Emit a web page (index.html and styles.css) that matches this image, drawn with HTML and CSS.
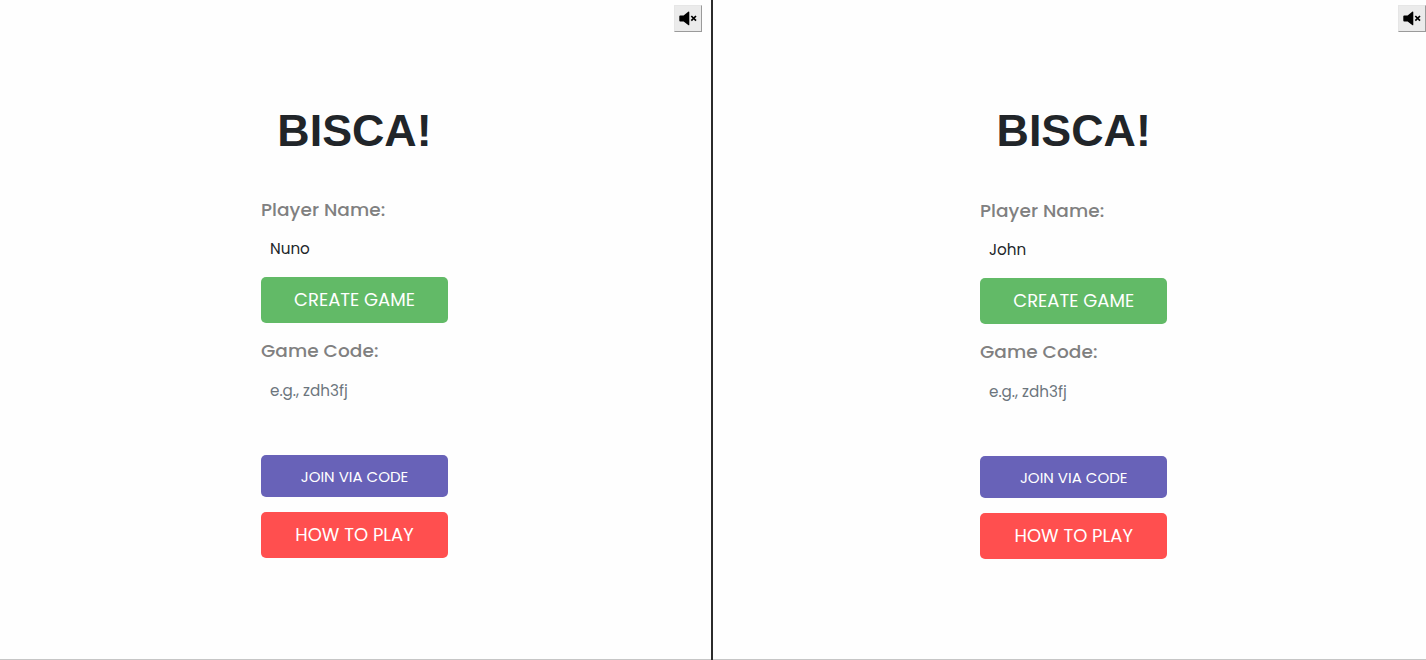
FILE: index.html
```html
<!DOCTYPE html>
<html lang="en">
<head>
<meta charset="utf-8">
<title>Bisca</title>
<link rel="stylesheet" href="styles.css">
</head>
<body>
<main class="split">
  <section class="pane pane-left">
    <button class="mute" aria-label="Unmute"><svg viewBox="0 0 18 16" width="18" height="16"><path d="M1.2 4.4H4.6L9.2.7Q10.3 0 10.3 1.3V13.5Q10.3 14.8 9.2 14.1L4.6 10.4H1.2Q.3 10.4.3 9.5V5.3Q.3 4.4 1.2 4.4Z"/><path class="cross" d="M12.3 5L17 9.7M17 5L12.3 9.7"/></svg></button>
    <div class="lobby">
      <h1 class="title">BISCA!</h1>
      <div class="label label-player">Player Name:</div>
      <div class="field">Nuno</div>
      <button class="btn create">CREATE GAME</button>
      <div class="label label-code">Game Code:</div>
      <div class="field placeholder">e.g., zdh3fj</div>
      <button class="btn join">JOIN VIA CODE</button>
      <button class="btn help">HOW TO PLAY</button>
    </div>
  </section>
  <section class="pane pane-right">
    <button class="mute" aria-label="Unmute"><svg viewBox="0 0 18 16" width="18" height="16"><path d="M1.2 4.4H4.6L9.2.7Q10.3 0 10.3 1.3V13.5Q10.3 14.8 9.2 14.1L4.6 10.4H1.2Q.3 10.4.3 9.5V5.3Q.3 4.4 1.2 4.4Z"/><path class="cross" d="M12.3 5L17 9.7M17 5L12.3 9.7"/></svg></button>
    <div class="lobby">
      <h1 class="title">BISCA!</h1>
      <div class="label label-player">Player Name:</div>
      <div class="field">John</div>
      <button class="btn create">CREATE GAME</button>
      <div class="label label-code">Game Code:</div>
      <div class="field placeholder">e.g., zdh3fj</div>
      <button class="btn join">JOIN VIA CODE</button>
      <button class="btn help">HOW TO PLAY</button>
    </div>
  </section>
</main>
</body>
</html>
```
FILE: styles.css
```css
* { box-sizing: border-box; }
body { margin: 0; background: #fefefe; font-family: Poppins, Inter, sans-serif; }
.split { display: flex; height: 660px; overflow: hidden; background: linear-gradient(#c6c6c6, #c6c6c6) bottom / 100% 1px no-repeat; }
.pane { position: relative; }
.pane-left { width: 713px; padding: 105px 0 0 261px; border-right: 2px solid #2b2b2b; }
.pane-right { width: 713px; padding: 106px 0 0 267px; }
.lobby { display: flex; flex-direction: column; width: 187px; }
.pane-right .lobby { width: 187.4px; }
.mute {
  position: absolute; top: 5px; right: 9px; width: 28px; height: 27px;
  display: flex; align-items: center; justify-content: center; padding: 0;
  background: #ebebeb; border: 1px solid #e6e6e6;
  border-right: 1px solid #9a9a9a; border-bottom: 1px solid #9a9a9a;
}
.pane-right .mute { right: 0; }
.mute svg { display: block; fill: #000; }
.mute .cross { fill: none; stroke: #000; stroke-width: 1.7; }
.title {
  margin: 0; height: 50px; text-align: center; white-space: nowrap;
  font: bold 44.8px/50px "Liberation Sans", Arial, sans-serif; color: #212529;
}
.pane-right .title { line-height: 49px; }
.label { height: 28px; line-height: 28px; font-size: 18.5px; letter-spacing: .06px; font-weight: 500; color: #808080; white-space: nowrap; }
.label-player { margin-top: 41px; }
.label-code { margin-top: 14px; }
.field { height: 24px; line-height: 24px; margin-top: 13px; padding-left: 9px; font-size: 15.2px; color: #212529; white-space: nowrap; }
.placeholder { margin-top: 14px; color: #6c757d; }
.btn {
  display: block; width: 100%; padding: 0; border: 0; border-radius: 5px;
  color: #fff; font-family: inherit; font-weight: 400; text-align: center; white-space: nowrap;
}
.create { height: 46px; margin-top: 16px; padding-bottom: 1px; background: #62ba67; font-size: 18px; }
.join { height: 42px; margin-top: 52px; background: #6862b8; font-size: 15px; }
.help { height: 46px; margin-top: 15px; background: #ff4f4f; font-size: 18px; padding-bottom: 1px; }
```
